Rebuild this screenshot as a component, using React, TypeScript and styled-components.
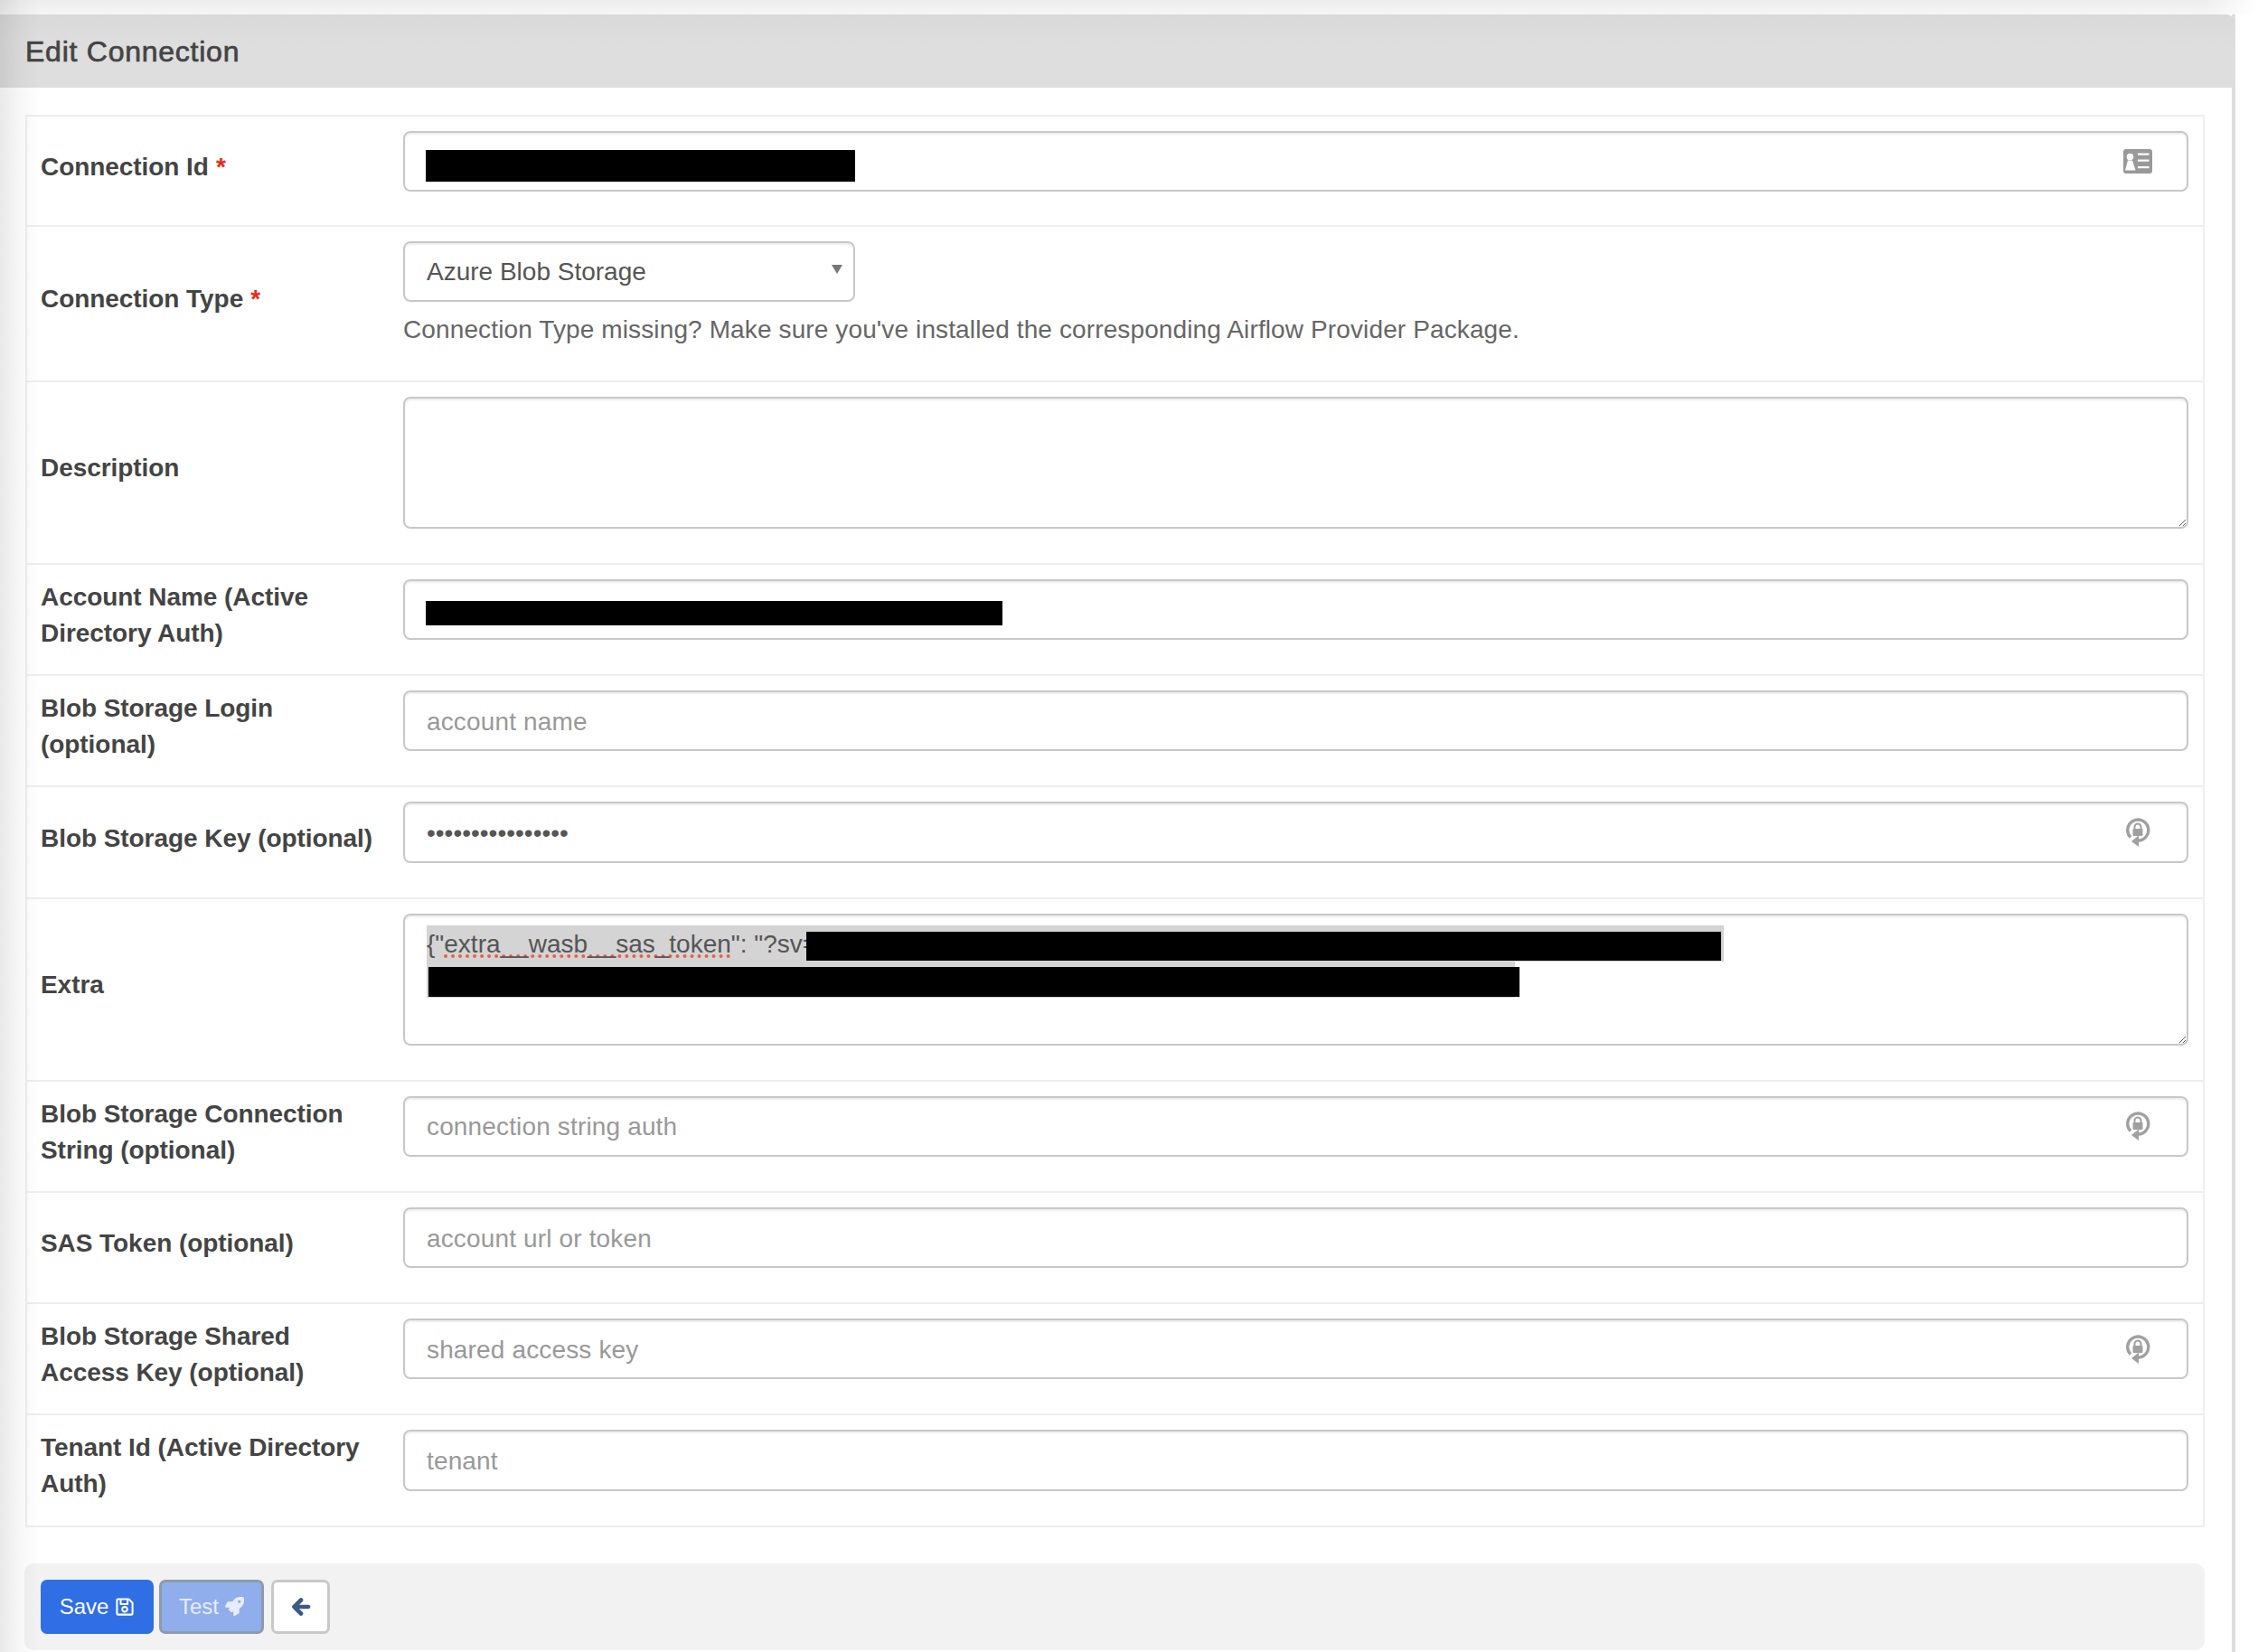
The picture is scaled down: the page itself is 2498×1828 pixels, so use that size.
import * as React from 'react';
import styled, { createGlobalStyle } from 'styled-components';
import { FaRegSave, FaRocket } from 'react-icons/fa';

const GlobalStyle = createGlobalStyle`
    html, body {
        margin: 0;
        padding: 0;
        height: 1828px;
        overflow: hidden;
        background: #fff;
    }
    * {
        box-sizing: border-box;
    }
`;

const Page = styled.div`
    position: relative;
    width: 2498px;
    height: 1828px;
    overflow: hidden;
    font-family: "Liberation Sans", Arial, sans-serif;
    font-size: 28px;
    line-height: 40px;
    color: #444;
`;

const LeftShade = styled.div`
    position: absolute;
    top: 0;
    left: 0;
    width: 44px;
    height: 100%;
    pointer-events: none;
    background: linear-gradient(to right, rgba(0, 0, 0, 0.085), rgba(0, 0, 0, 0.03) 50%, rgba(0, 0, 0, 0));
`;

const TopShade = styled.div`
    height: 16px;
    background: linear-gradient(to bottom, #ededed, #f5f5f5);
    mask-image: linear-gradient(to right, #000 2440px, transparent 2498px);
`;

const Panel = styled.section`
    width: 2473px;
    min-height: 1812px;
    background: #fff;
    border-right: 4px solid #ddd;
`;

const PanelHeader = styled.header`
    height: 81px;
    margin-right: -4px;
    padding-left: 28px;
    display: flex;
    align-items: center;
    border-top-right-radius: 10px;
    background: linear-gradient(to bottom, #d9d9d9, #dedede 40%);
`;

const PanelTitle = styled.h1`
    margin: 0;
    font-size: 32px;
    font-weight: 400;
    letter-spacing: 0.75px;
    color: #444;
    -webkit-text-stroke: 0.7px #444;
`;

const PanelBody = styled.div`
    padding: 30px 30px 0 27px;
`;

const FormTable = styled.div`
    border: 2px solid #eee;
    border-bottom-width: 0;
    margin-left: 1px;
`;

const Row = styled.div`
    display: grid;
    grid-template-columns: 416px 1fr;
    padding: 16px 16px 18px 0;
    border-bottom: 2px solid #eee;

    &:first-child {
        padding-bottom: 16.5px;
    }
`;

const LabelCell = styled.div`
    display: flex;
    align-items: center;
    padding: 0 26px 7px 15px;
    font-weight: 700;
    letter-spacing: -0.06px;
`;

const Required = styled.span`
    color: #e7291c;
    margin-left: 8px;
`;

const Field = styled.div`
    position: relative;
    margin-bottom: 20px;
`;

const TextInput = styled.input`
    display: block;
    width: 100%;
    height: 67.2px;
    padding: 2px 24px 0;
    border: 2px solid #c8c8c8;
    border-radius: 8px;
    box-shadow: inset 0 2px 2px rgba(0, 0, 0, 0.07);
    font: inherit;
    letter-spacing: ${(p) => (p.type === 'password' ? 0 : 0.15)}px;
    color: #555;
    background: #fff;
    outline: none;

    &::placeholder {
        color: #999;
        opacity: 1;
    }
`;

const TextArea = styled.textarea`
    display: block;
    width: 100%;
    height: 146.2px;
    padding: 12px 24px;
    border: 2px solid #c8c8c8;
    border-radius: 8px;
    box-shadow: inset 0 2px 2px rgba(0, 0, 0, 0.07);
    font: inherit;
    color: #555;
    background: #fff;
    outline: none;
`;

const SelectWrap = styled.div`
    position: relative;
    width: 500px;

    &::after {
        content: '';
        position: absolute;
        top: 26px;
        right: 14px;
        border-left: 6px solid transparent;
        border-right: 6px solid transparent;
        border-top: 10px solid #777;
    }
`;

const Select = styled.select`
    display: block;
    width: 100%;
    height: 67.2px;
    padding: 2px 24px 0;
    border: 2px solid #c8c8c8;
    border-radius: 8px;
    box-shadow: inset 0 2px 2px rgba(0, 0, 0, 0.07);
    appearance: none;
    font: inherit;
    color: #555;
    background: #fff;
    outline: none;
`;

const HelpText = styled.div`
    margin: 11px 0 -2px;
    letter-spacing: 0.12px;
    color: #666;
`;

const FieldIcon = styled.span`
    position: absolute;
    top: 0;
    right: 40px;
    height: 67px;
    display: flex;
    align-items: center;
    color: #a0a0a0;
`;

const Redaction = styled.div<{ $left: number; $top: number; $width: number; $height: number }>`
    position: absolute;
    left: ${(p) => p.$left}px;
    top: ${(p) => p.$top}px;
    width: ${(p) => p.$width}px;
    height: ${(p) => p.$height}px;
    background: #000;
`;

const SelectedText = styled.div`
    position: absolute;
    top: 13px;
    left: 26px;
`;

const SelectedLine = styled.div<{ $width: number }>`
    position: relative;
    width: ${(p) => p.$width}px;
    height: 40px;
    line-height: 42px;
    background: #d4d4d4;
    white-space: nowrap;
    color: #555;
`;

const Misspelled = styled.span`
    text-decoration: underline dotted #e8604c 4px;
    text-underline-offset: 3px;
`;

const Footer = styled.div`
    display: flex;
    align-items: flex-start;
    gap: 6px;
    height: 96px;
    margin-top: 40px;
    padding: 18px;
    border-radius: 10px;
    background: #f2f2f2;
`;

const Button = styled.button<{ $variant: 'primary' | 'disabled' | 'plain' }>`
    height: 60px;
    display: inline-flex;
    align-items: center;
    justify-content: center;
    gap: 7px;
    border-radius: 7px;
    font-family: inherit;
    font-size: 24px;
    width: ${(p) => (p.$variant === 'primary' ? 125 : p.$variant === 'disabled' ? 116 : 65)}px;
    margin-left: ${(p) => (p.$variant === 'plain' ? 2 : 0)}px;
    padding: 0;
    color: ${(p) => (p.$variant === 'primary' ? '#fff' : p.$variant === 'disabled' ? '#e6ecfa' : '#3b5a85')};
    background: ${(p) => (p.$variant === 'primary' ? '#2f6ee5' : p.$variant === 'disabled' ? '#90aeeb' : '#fff')};
    border: ${(p) =>
        p.$variant === 'primary'
            ? '0'
            : p.$variant === 'disabled'
              ? '3px solid #8b9bad'
              : '3px solid #c8c8c8'};
`;

// lock inside a circular arrow, the icon on the password fields
const LockCycleIcon = () => (
    <svg width="32" height="34" viewBox="-2 0 32 34" fill="none">
        <path d="M6 22.5 A11.5 11.5 0 1 1 14 26" stroke="currentColor" strokeWidth="3.4" fill="none" />
        <path d="M7 27 L15 20.5 V33 Z" fill="currentColor" />
        <path d="M10.5 13 V11 a3.5 3.5 0 0 1 7 0 V13" stroke="currentColor" strokeWidth="2" />
        <rect x="8.5" y="13" width="11" height="8" rx="1" fill="currentColor" />
    </svg>
);

// id card: person on the left, three lines on the right
const IdCardIcon = () => (
    <svg width="32" height="27" viewBox="0 0 32 27">
        <rect width="32" height="27" rx="3" fill="#999" />
        <circle cx="7.5" cy="8.5" r="3.8" fill="#fff" />
        <path d="M5 12.5 H10 L13.5 23.5 H2 Z" fill="#fff" />
        <rect x="16" y="4.5" width="12.5" height="2.2" fill="#fff" />
        <rect x="16" y="11.5" width="12.5" height="2.2" fill="#fff" />
        <rect x="16" y="19" width="12.5" height="2.2" fill="#fff" />
    </svg>
);

const BackArrowIcon = () => (
    <svg width="22" height="22" viewBox="0 0 22 22" fill="none" stroke="currentColor" strokeWidth="4.6" strokeLinecap="round" strokeLinejoin="round">
        <path d="M19 11 H4" />
        <path d="M11 3.5 L3.5 11 L11 18.5" />
    </svg>
);

type RowConfig = {
    label: string;
    required?: boolean;
    placeholder?: string;
    icon?: React.ReactNode;
    redactWidth?: number;
    password?: string;
};

const topRows: RowConfig[] = [
    { label: 'Account Name (Active Directory Auth)', redactWidth: 638 },
    { label: 'Blob Storage Login (optional)', placeholder: 'account name' },
    { label: 'Blob Storage Key (optional)', password: '••••••••••••••••', icon: <LockCycleIcon /> },
];

const bottomRows: RowConfig[] = [
    { label: 'Blob Storage Connection String (optional)', placeholder: 'connection string auth', icon: <LockCycleIcon /> },
    { label: 'SAS Token (optional)', placeholder: 'account url or token' },
    { label: 'Blob Storage Shared Access Key (optional)', placeholder: 'shared access key', icon: <LockCycleIcon /> },
    { label: 'Tenant Id (Active Directory Auth)', placeholder: 'tenant' },
];

const InputRow: React.FC<RowConfig> = ({ label, required, placeholder, icon, redactWidth, password }) => (
    <Row>
        <LabelCell>
            <span>
                {label}
                {required && <Required>*</Required>}
            </span>
        </LabelCell>
        <Field>
            <TextInput
                type={password ? 'password' : 'text'}
                defaultValue={password ? 'xxxxxxxxxxxxxxxx' : undefined}
                placeholder={placeholder}
                readOnly
            />
            {redactWidth && <Redaction $left={25} $top={label === 'Connection Id' ? 21 : 24} $width={redactWidth} $height={label === 'Connection Id' ? 35 : 27} />}
            {icon && <FieldIcon>{icon}</FieldIcon>}
        </Field>
    </Row>
);

export default function App() {
    return (
        <Page>
            <GlobalStyle />
            <TopShade />
            <Panel>
                <PanelHeader>
                    <PanelTitle>Edit Connection</PanelTitle>
                </PanelHeader>
                <PanelBody>
                    <FormTable>
                        <InputRow label="Connection Id" required redactWidth={475} icon={<IdCardIcon />} />
                        <Row>
                            <LabelCell>
                                <span>
                                    Connection Type<Required>*</Required>
                                </span>
                            </LabelCell>
                            <Field>
                                <SelectWrap>
                                    <Select defaultValue="wasb">
                                        <option value="wasb">Azure Blob Storage</option>
                                    </Select>
                                </SelectWrap>
                                <HelpText>
                                    Connection Type missing? Make sure you've installed the corresponding Airflow Provider Package.
                                </HelpText>
                            </Field>
                        </Row>
                        <Row>
                            <LabelCell>Description</LabelCell>
                            <Field>
                                <TextArea readOnly />
                            </Field>
                        </Row>
                        {topRows.map((row) => (
                            <InputRow key={row.label} {...row} />
                        ))}
                        <Row>
                            <LabelCell>Extra</LabelCell>
                            <Field>
                                <TextArea readOnly />
                                <SelectedText>
                                    <SelectedLine $width={1435}>
                                        {'{"'}
                                        <Misspelled>extra__wasb__sas_token</Misspelled>
                                        {'": "?sv='}
                                        <Redaction $left={420} $top={7} $width={1012} $height={32} />
                                    </SelectedLine>
                                    <SelectedLine $width={1204}>
                                        <Redaction $left={2} $top={6} $width={1207} $height={33} />
                                    </SelectedLine>
                                </SelectedText>
                            </Field>
                        </Row>
                        {bottomRows.map((row) => (
                            <InputRow key={row.label} {...row} />
                        ))}
                    </FormTable>
                    <Footer>
                        <Button $variant="primary">
                            Save <FaRegSave size={22} />
                        </Button>
                        <Button $variant="disabled">
                            Test <FaRocket size={21} />
                        </Button>
                        <Button $variant="plain">
                            <BackArrowIcon />
                        </Button>
                    </Footer>
                </PanelBody>
            </Panel>
            <LeftShade />
        </Page>
    );
}
